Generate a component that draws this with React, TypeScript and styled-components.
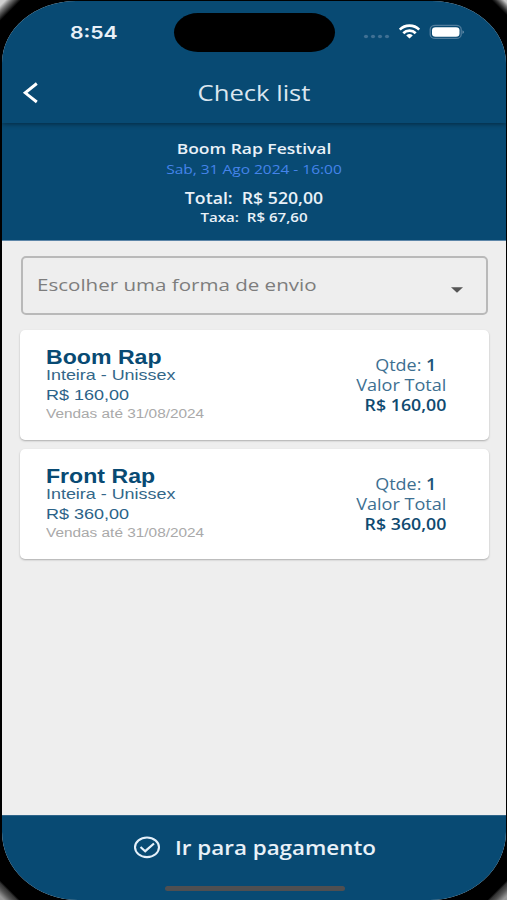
import React from 'react';
import styled, { createGlobalStyle } from 'styled-components';

const GlobalStyle = createGlobalStyle`
  * { box-sizing: border-box; }
  body { margin: 0; background: #000; font-family: "Open Sans", sans-serif; }
`;

const Phone = styled.div`
  width: 507px;
  height: 900px;
  overflow: hidden;
  padding: 1px 1px 0 2px;
  background:
    linear-gradient(135deg, #d0d0d0 4px, #777 8px, #333 12px, transparent 15px),
    linear-gradient(225deg, #c9c9c9 2px, #777 5px, #333 8px, transparent 11px),
    linear-gradient(45deg, #999 3px, #555 8px, #333 12px, transparent 14px),
    linear-gradient(315deg, #999 3px, #555 8px, #333 12px, transparent 14px),
    #000;
`;

const Screen = styled.main`
  display: flex;
  flex-direction: column;
  height: 899px;
  overflow: hidden;
  border-radius: 74px 74px 76px 76px / 62px 62px 68px 68px;
  background: #eeeeee;
`;

const Header = styled.header`
  position: relative;
  flex: none;
  height: 122px;
  background: #084a73;
  box-shadow: 0 1px 5px rgba(0, 0, 0, 0.45);
`;

const StatusBar = styled.div`
  display: grid;
  grid-template-columns: 172px 161px 1fr;
  height: 62px;
  padding-top: 12px;
`;

const Island = styled.div`
  height: 39px;
  border-radius: 24px / 19.5px;
  background: #000;
`;

const StatusIcons = styled.div`
  display: flex;
  align-items: flex-start;
  padding: 10px 0 0 28px;
`;

const TitleBar = styled.div`
  display: grid;
  grid-template-columns: 60px 1fr 60px;
  height: 60px;
`;

const BackButton = styled.button`
  display: flex;
  padding: 19px 0 0 20px;
  border: 0;
  background: none;
`;

type TextProps = {
  $size: number;
  $line: number;
  $stretch?: number;
  $weight?: number;
  $color?: string;
  $origin?: string;
  $family?: string;
};

const Text = styled.div<TextProps>`
  font-family: ${(p) => p.$family ?? '"Open Sans", sans-serif'};
  font-size: ${(p) => p.$size}px;
  line-height: ${(p) => p.$line}px;
  font-weight: ${(p) => p.$weight ?? 400};
  color: ${(p) => p.$color ?? '#e9f1f8'};
  white-space: pre;
  transform: scaleX(${(p) => p.$stretch ?? 1.2});
  transform-origin: ${(p) => p.$origin ?? 'center'};

  b { font-weight: 600; color: #1c5478; }
`;

const Clock = styled.div`
  padding: 8px 0 0 68px;
`;

const Title = styled.div`
  padding-top: 15px;
  text-align: center;
`;

const Summary = styled.section`
  flex: none;
  height: 118px;
  padding-top: 15px;
  background: #084a73;
  border-bottom: 1px solid #5d86a8;
  text-align: center;
`;

const Totals = styled.div`
  padding-top: 8px;
`;

const Content = styled.section`
  flex: 1;
  display: flex;
  flex-direction: column;
  padding: 15px 17px 0 18px;
`;

const Select = styled.div`
  display: flex;
  justify-content: space-between;
  height: 59px;
  margin: 0 1px 15px 1px;
  padding: 15px 23px 0 14px;
  border: 2px solid #b9b9b9;
  border-radius: 5px;
`;

const Caret = styled.svg`
  margin-top: 14px;
`;

const Card = styled.article`
  display: flex;
  justify-content: space-between;
  height: 110px;
  margin-bottom: 8.5px;
  padding: 17px 43px 0 26px;
  border-radius: 5px;
  background: #fff;
  box-shadow: 0 1px 2px rgba(0, 0, 0, 0.28);
`;

const Amount = styled.div`
  padding-top: 9px;
  text-align: right;
`;

const Quantity = styled.div`
  padding-right: 10px;
`;

const PayButton = styled.footer`
  flex: none;
  height: 85px;
  background: #084a73;
  border-top: 1px solid #2e6489;
  display: flex;
  flex-direction: column;
`;

const PayRow = styled.div`
  display: flex;
  height: 70px;
  padding: 19px 0 0 131px;
  gap: 14px;
`;

const HomeIndicator = styled.div`
  width: 180px;
  height: 5px;
  margin-left: 163px;
  border-radius: 3px;
  background: #4f4f51;
`;

const arial = '"Liberation Sans", sans-serif';

const tickets = [
  { name: 'Boom Rap', price: 'R$ 160,00' },
  { name: 'Front Rap', price: 'R$ 360,00' },
];

export default function App() {
  return (
    <Phone>
      <GlobalStyle />
      <Screen>
        <Header>
          <StatusBar>
            <Clock>
              <Text $family='Inter, sans-serif' $size={17.5} $line={24} $weight={600} $origin="left" $stretch={1.21}>8:54</Text>
            </Clock>
            <Island />
            <StatusIcons>
              <svg width="105" height="20" viewBox="0 0 105 20">
                <g fill="#3f7093">
                  <ellipse cx="3" cy="13.5" rx="2.1" ry="1.8" />
                  <ellipse cx="10" cy="13.5" rx="2.1" ry="1.8" />
                  <ellipse cx="17" cy="13.5" rx="2.1" ry="1.8" />
                  <ellipse cx="24" cy="13.5" rx="2.1" ry="1.8" />
                </g>
                <g transform="translate(46.5 2)" fill="none" stroke="#fff" strokeWidth="2.7">
                  <path d="M-9.7 4.6C-4.5-.6 4.5-.6 9.7 4.6" />
                  <path d="M-6.2 8.2C-2.8 4.8 2.8 4.8 6.2 8.2" />
                  <path d="M-3.3 10.5Q0 7.7 3.3 10.5L0 13.4Z" fill="#fff" stroke="none" />
                </g>
                <rect x="67.2" y="2.4" width="31" height="13" rx="5" ry="4" fill="none" stroke="#517d9d" strokeWidth="1.3" />
                <rect x="69" y="4.2" width="27.5" height="9.6" rx="3.5" ry="3" fill="#fff" />
                <path d="M99.5 7.2Q102.5 9 99.5 11Z" fill="#6b91ac" />
              </svg>
            </StatusIcons>
          </StatusBar>
          <TitleBar>
            <BackButton aria-label="Voltar">
              <svg width="18" height="22" viewBox="0 0 18 22">
                <path d="M14.8 1.5L3.2 10.8L14.8 20" fill="none" stroke="#fff" strokeWidth="2.9" />
              </svg>
            </BackButton>
            <Title>
              <Text $size={21} $line={30} $stretch={1.22} $color="#dbe6ef">Check list</Text>
            </Title>
            <span />
          </TitleBar>
        </Header>
        <Summary>
          <Text $size={14.8} $line={20} $stretch={1.18} $weight={600}>Boom Rap Festival</Text>
          <Text $size={13} $line={22} $stretch={1.19} $color="#4584ea">Sab, 31 Ago 2024 - 16:00</Text>
          <Totals>
            <Text $size={15.5} $line={21} $stretch={1.14} $weight={600}>Total:  R$ 520,00</Text>
            <Text $size={13} $line={16} $stretch={1.16} $weight={600}>Taxa:  R$ 67,60</Text>
          </Totals>
        </Summary>
        <Content>
          <Select role="combobox" aria-expanded={false}>
            <Text $size={17} $line={23} $stretch={1.208} $origin="left" $color="#7d7d7d">Escolher uma forma de envio</Text>
            <Caret width="12" height="6" viewBox="0 0 12 6">
              <path d="M0 .3H12L6 5.8Z" fill="#555" />
            </Caret>
          </Select>
          {tickets.map((ticket) => (
            <Card key={ticket.name}>
              <div>
                <Text $family={arial} $size={19.5} $line={20} $stretch={1.185} $weight={700} $origin="left" $color="#084a73">{ticket.name}</Text>
                <Text $family={arial} $size={14.5} $line={16} $stretch={1.235} $origin="left" $color="#336789">Inteira - Unissex</Text>
                <Text $family={arial} $size={15} $line={23} $origin="left" $color="#2b6288">{ticket.price}</Text>
                <Text $family={arial} $size={12.5} $line={16} $stretch={1.23} $origin="left" $color="#a9a9a9">Vendas até 31/08/2024</Text>
              </div>
              <Amount>
                <Quantity>
                  <Text $size={15.5} $line={19} $stretch={1.16} $origin="right" $color="#3d6f91">Qtde: <b>1</b></Text>
                </Quantity>
                <Text $size={15.5} $line={21} $stretch={1.165} $origin="right" $color="#3d6f91">Valor Total</Text>
                <Text $size={15.6} $line={19} $stretch={1.14} $weight={600} $origin="right" $color="#0f4a70">{ticket.price}</Text>
              </Amount>
            </Card>
          ))}
        </Content>
        <PayButton>
          <PayRow>
            <svg width="28" height="26" viewBox="0 0 28 26">
              <ellipse cx="14" cy="12.3" rx="12" ry="9.8" fill="none" stroke="#e4f0fa" strokeWidth="2.1" />
              <path d="M7.5 12L12.2 16.2L21 8.5" fill="none" stroke="#e4f0fa" strokeWidth="2.2" />
            </svg>
            <Text $size={19.5} $line={26} $stretch={1.148} $weight={600} $origin="left">Ir para pagamento</Text>
          </PayRow>
          <HomeIndicator />
        </PayButton>
      </Screen>
    </Phone>
  );
}
